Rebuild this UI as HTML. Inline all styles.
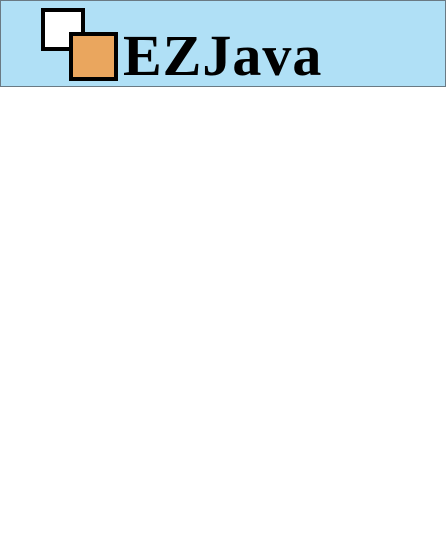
<!DOCTYPE html>
<html><head><style>
body{margin:0;width:446px;height:544px;background:#fff;overflow:hidden;position:relative}
.bar{position:absolute;left:0;top:0;width:444px;height:85px;background:#b0e0f6;border:1px solid #6a7a84}
.sq1{position:absolute;left:41px;top:8px;width:36px;height:35px;border:4px solid #000;background:#fff}
.sq2{position:absolute;left:69px;top:32px;width:41px;height:41px;border:4px solid #000;background:#eaa65e}
.t{position:absolute;left:123px;top:23px;font:bold 58px "Liberation Serif",serif;letter-spacing:1px;color:#000;line-height:66px;white-space:nowrap}
</style></head><body>
<div class="bar"></div>
<div class="sq1"></div>
<div class="sq2"></div>
<div class="t">EZJava</div>
</body></html>
